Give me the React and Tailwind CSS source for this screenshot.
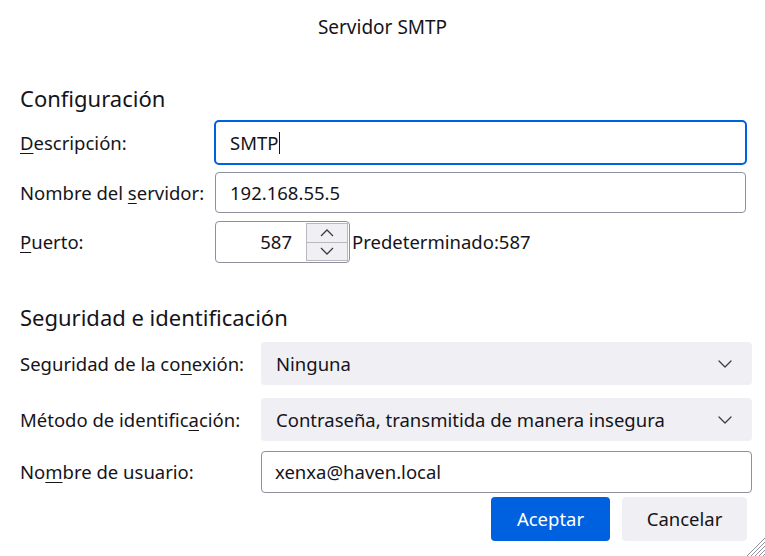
import React from "react";

function Chevron() {
  return (
    <svg width="14" height="8" viewBox="0 0 14 8" fill="none" className="shrink-0">
      <path d="M1 1l6 6 6-6" stroke="#3b3b45" strokeWidth="1.3" strokeLinecap="round" strokeLinejoin="round" />
    </svg>
  );
}

function U({ children }) {
  return <span className="underline underline-offset-[3px] decoration-1">{children}</span>;
}

export default function App() {
  return (
    <div
      className="relative w-[765px] h-[556px] bg-white text-[#15141a] overflow-hidden text-[18.5px]"
      style={{ fontFamily: '"Noto Sans", "Open Sans", sans-serif' }}
    >
      <div className="h-[54px] flex items-center justify-center text-[19px]">Servidor SMTP</div>

      <div className="px-5">
        <div className="mt-[30px] h-[28px] flex items-center text-[22px] leading-[28px]">Configuración</div>

        <div className="mt-[8px] grid grid-cols-[195px_1fr] items-center">
          <div><U>D</U>escripción:</div>
          <div className="-ml-px mr-[-2px] h-[45px] rounded-[5px] border-2 border-[#0061e0] flex items-center pl-[14px]">
            SMTP<span className="inline-block w-px h-[22px] bg-[#15141a] ml-px"></span>
          </div>
        </div>

        <div className="mt-[7px] grid grid-cols-[195px_1fr] items-center">
          <div className="whitespace-nowrap">Nombre del <U>s</U>ervidor:</div>
          <div className="h-[41px] mr-[-1px] rounded-[4px] border border-[#8f8f9d] flex items-center pl-[14px]">192.168.55.5</div>
        </div>

        <div className="mt-[8px] grid grid-cols-[195px_1fr] items-center">
          <div><U>P</U>uerto:</div>
          <div className="flex items-center">
            <div className="w-[135px] h-[42px] rounded-[4px] border border-[#8f8f9d] flex items-center pr-[1px]">
              <div className="flex-1 text-right pr-[14px]">587</div>
              <div className="w-[42px] h-[38px] flex flex-col border border-[#b8b8c0] bg-[#f0f0f4]">
                <div className="flex-1 flex items-center justify-center border-b border-[#b8b8c0]">
                  <svg width="14" height="8" viewBox="0 0 14 8" fill="none"><path d="M1 7l6-6 6 6" stroke="#3b3b45" strokeWidth="1.3" /></svg>
                </div>
                <div className="flex-1 flex items-center justify-center">
                  <svg width="14" height="8" viewBox="0 0 14 8" fill="none"><path d="M1 1l6 6 6-6" stroke="#3b3b45" strokeWidth="1.3" /></svg>
                </div>
              </div>
            </div>
            <div className="ml-[2px]">Predeterminado:587</div>
          </div>
        </div>

        <div className="mt-[40px] h-[28px] flex items-center text-[22px] leading-[28px]">Seguridad e identificación</div>

        <div className="mt-[11px] grid grid-cols-[241px_1fr] items-center">
          <div className="whitespace-nowrap">Seguridad de la co<U>n</U>exión:</div>
          <div className="h-[43px] mr-[-7px] rounded-[4px] bg-[#f0f0f4] flex items-center justify-between pl-[15px] pr-[20px]">
            <span>Ninguna</span>
            <Chevron />
          </div>
        </div>

        <div className="mt-[13px] grid grid-cols-[241px_1fr] items-center">
          <div className="whitespace-nowrap">Método de identific<U>a</U>ción:</div>
          <div className="h-[43px] mr-[-7px] rounded-[4px] bg-[#f0f0f4] flex items-center justify-between pl-[15px] pr-[20px]">
            <span>Contraseña, transmitida de manera insegura</span>
            <Chevron />
          </div>
        </div>

        <div className="mt-[10px] grid grid-cols-[241px_1fr] items-center">
          <div>No<U>m</U>bre de usuario:</div>
          <div className="h-[42px] mr-[-7px] rounded-[4px] border border-[#8f8f9d] flex items-center pl-[13px]">xenxa@haven.local</div>
        </div>

        <div className="mt-[4px] flex justify-end gap-[12px] mr-[-2px]">
          <button className="w-[119px] h-[44px] rounded-[4px] bg-[#0061e0] text-white">Aceptar</button>
          <button className="w-[125px] h-[44px] rounded-[4px] bg-[#f0f0f4] text-[#15141a]">Cancelar</button>
        </div>
      </div>

      <svg className="absolute right-0 bottom-0" width="20" height="20" viewBox="0 0 20 20">
        <path d="M20 2L2 20M20 6L6 20M20 10L10 20M20 14L14 20M20 18L18 20" stroke="#8f8f9d" strokeWidth="1" />
      </svg>
    </div>
  );
}
